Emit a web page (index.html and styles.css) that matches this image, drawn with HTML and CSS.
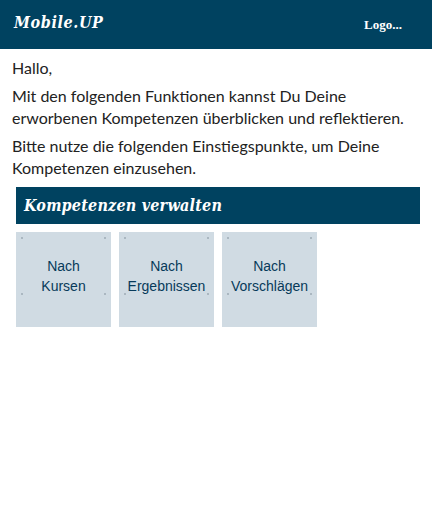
FILE: index.html
```html
<!DOCTYPE html>
<html lang="de">
<head>
<meta charset="utf-8">
<title>Mobile.UP</title>
<link rel="stylesheet" href="styles.css">
</head>
<body>
<header class="topbar">
  <div class="brand">Mobile.UP</div>
  <div class="logo">Logo...</div>
</header>
<main class="content">
  <p>Hallo,</p>
  <p>Mit den folgenden Funktionen kannst Du Deine erworbenen Kompetenzen überblicken und reflektieren.</p>
  <p>Bitte nutze die folgenden Einstiegspunkte, um Deine Kompetenzen einzusehen.</p>
  <section class="section">
    <h2 class="section-title">Kompetenzen verwalten</h2>
    <div class="tiles">
      <a class="tile"><span>Nach<br>Kursen</span></a>
      <a class="tile"><span>Nach<br>Ergebnissen</span></a>
      <a class="tile"><span>Nach<br>Vorschlägen</span></a>
    </div>
  </section>
</main>
</body>
</html>
```
FILE: styles.css
```css
html, body {
  margin: 0;
  padding: 0;
  background: #ffffff;
}
.topbar {
  height: 49px;
  background: #004260;
  display: flex;
  align-items: center;
  justify-content: space-between;
  padding: 0 30px 0 14px;
  box-sizing: border-box;
}
.brand {
  font-family: "DejaVu Serif Condensed", "DejaVu Serif", serif;
  font-stretch: condensed;
  font-style: italic;
  font-weight: bold;
  font-size: 16px;
  letter-spacing: 0.6px;
  color: #ffffff;
  margin-top: -5px;
}
.logo {
  font-family: "Liberation Serif", serif;
  font-weight: bold;
  font-size: 13px;
  color: #ffffff;
}
.content {
  padding: 8px 12px 0 12px;
  font-family: Lato, "Noto Sans", sans-serif;
  font-size: 16px;
  line-height: 22px;
  color: #222222;
}
.content p {
  margin: 0 0 6px 0;
}
.section {
  margin: 8px 0 0 4px;
}
.section-title {
  margin: 0;
  height: 37px;
  background: #004260;
  color: #ffffff;
  font-family: "DejaVu Serif Condensed", "DejaVu Serif", serif;
  font-stretch: condensed;
  font-style: italic;
  font-weight: bold;
  font-size: 16px;
  letter-spacing: 0.2px;
  line-height: 37px;
  padding: 0 8px;
}
.tiles {
  display: flex;
  gap: 8px;
  margin-top: 8px;
}
.tile {
  width: 95px;
  height: 95px;
  background-color: #d0dbe3;
  background-image:
    radial-gradient(circle, #7f8e99 0.6px, transparent 0.8px),
    radial-gradient(circle, #7f8e99 0.6px, transparent 0.8px),
    radial-gradient(circle, #7f8e99 0.6px, transparent 0.8px),
    radial-gradient(circle, #7f8e99 0.6px, transparent 0.8px);
  background-size: 2px 2px;
  background-repeat: no-repeat;
  background-position: 5px 5px, 88px 5px, 5px 61px, 88px 61px;
  display: flex;
  justify-content: center;
  align-items: flex-start;
  padding-top: 24px;
  box-sizing: border-box;
  font-family: "Liberation Sans", Arial, sans-serif;
  font-size: 14px;
  line-height: 20px;
  color: #073a5a;
  text-align: center;
}
```
